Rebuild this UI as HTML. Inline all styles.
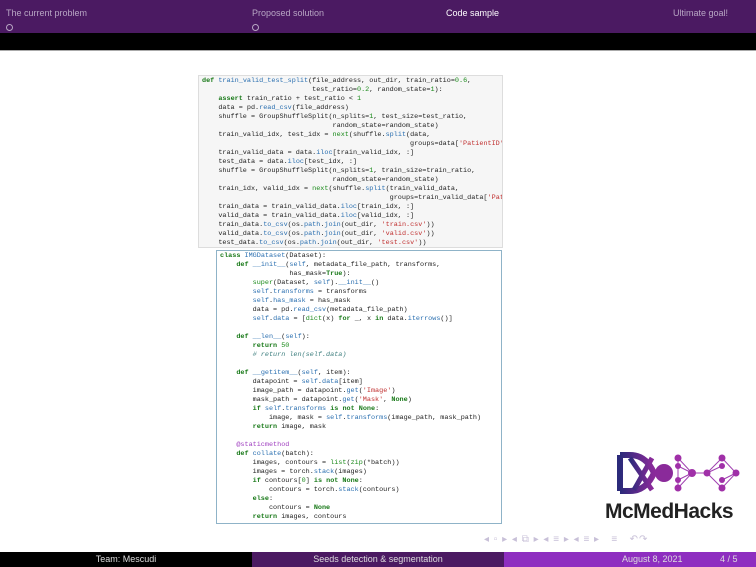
<!DOCTYPE html>
<html><head><style>
body{margin:0;width:756px;height:567px;position:relative;background:#fff;overflow:hidden;font-family:"Liberation Sans",sans-serif}
.hdr{position:absolute;left:0;top:0;width:756px;height:33px;background:#4b1a62}
.hdr span{position:absolute;top:8px;font-size:9px;color:#b8a6c4}
.dot{position:absolute;top:24px;width:5px;height:5px;border:1px solid #b8a6c4;border-radius:50%}
.blk{position:absolute;left:0;top:33px;width:756px;height:17px;background:#000;border-bottom:1px solid #aaa}
pre{margin:0;font-family:"Liberation Mono",monospace;font-size:6.8px;color:#222;position:absolute}
.c1{left:198px;top:75px;width:303px;height:171px;background:#f6f6f6;border:1px solid #ddd;overflow:hidden}
.c1 pre{left:3px;top:1px;line-height:9px}
.c2{left:216px;top:250px;width:284px;height:272px;background:#fff;border:1px solid #8fb3c8}
.c2 pre{left:3px;top:1px;line-height:9px}
b{color:#1a7a1a}
.f{color:#2a6fb0}
.s{color:#c03030}
.n{color:#1a8a1a}
.m{color:#a040c0}
i{color:#408080}
.ft{position:absolute;top:552px;height:15px;font-size:9px;color:#ddd;text-align:center;line-height:15px}
</style></head><body>
<div class="hdr">
<span style="left:6px">The current problem</span>
<span style="left:252px">Proposed solution</span>
<span style="left:446px;color:#fff">Code sample</span>
<span style="left:673px">Ultimate goal!</span>
<div class="dot" style="left:6px"></div><div class="dot" style="left:252px"></div>
</div>
<div class="blk"></div>
<div class="c1" style="position:absolute"><pre><b>def</b> <span class="f">train_valid_test_split</span>(file_address, out_dir, train_ratio=<span class="n">0.6</span>,
                           test_ratio=<span class="n">0.2</span>, random_state=<span class="n">1</span>):
    <b>assert</b> train_ratio + test_ratio &lt; <span class="n">1</span>
    data = pd.<span class="f">read_csv</span>(file_address)
    shuffle = GroupShuffleSplit(n_splits=<span class="n">1</span>, test_size=test_ratio,
                                random_state=random_state)
    train_valid_idx, test_idx = <span class="n">next</span>(shuffle.<span class="f">split</span>(data,
                                                   groups=data[<span class="s">'PatientID'</span>]))
    train_valid_data = data.<span class="f">iloc</span>[train_valid_idx, :]
    test_data = data.<span class="f">iloc</span>[test_idx, :]
    shuffle = GroupShuffleSplit(n_splits=<span class="n">1</span>, train_size=train_ratio,
                                random_state=random_state)
    train_idx, valid_idx = <span class="n">next</span>(shuffle.<span class="f">split</span>(train_valid_data,
                                              groups=train_valid_data[<span class="s">'PatientID'</span>]))
    train_data = train_valid_data.<span class="f">iloc</span>[train_idx, :]
    valid_data = train_valid_data.<span class="f">iloc</span>[valid_idx, :]
    train_data.<span class="f">to_csv</span>(os.<span class="f">path</span>.<span class="f">join</span>(out_dir, <span class="s">'train.csv'</span>))
    valid_data.<span class="f">to_csv</span>(os.<span class="f">path</span>.<span class="f">join</span>(out_dir, <span class="s">'valid.csv'</span>))
    test_data.<span class="f">to_csv</span>(os.<span class="f">path</span>.<span class="f">join</span>(out_dir, <span class="s">'test.csv'</span>))</pre></div>
<div class="c2" style="position:absolute"><pre><b>class</b> <span class="f">IMGDataset</span>(Dataset):
    <b>def</b> <span class="f">__init__</span>(<span class="f">self</span>, metadata_file_path, transforms,
                 has_mask=<b>True</b>):
        <span class="n">super</span>(Dataset, <span class="f">self</span>).<span class="f">__init__</span>()
        <span class="f">self</span>.<span class="f">transforms</span> = transforms
        <span class="f">self</span>.<span class="f">has_mask</span> = has_mask
        data = pd.<span class="f">read_csv</span>(metadata_file_path)
        <span class="f">self</span>.<span class="f">data</span> = [<span class="n">dict</span>(x) <b>for</b> _, x <b>in</b> data.<span class="f">iterrows</span>()]

    <b>def</b> <span class="f">__len__</span>(<span class="f">self</span>):
        <b>return</b> <span class="n">50</span>
        <i># return len(self.data)</i>

    <b>def</b> <span class="f">__getitem__</span>(<span class="f">self</span>, item):
        datapoint = <span class="f">self</span>.<span class="f">data</span>[item]
        image_path = datapoint.<span class="f">get</span>(<span class="s">'Image'</span>)
        mask_path = datapoint.<span class="f">get</span>(<span class="s">'Mask'</span>, <b>None</b>)
        <b>if</b> <span class="f">self</span>.<span class="f">transforms</span> <b>is not None</b>:
            image, mask = <span class="f">self</span>.<span class="f">transforms</span>(image_path, mask_path)
        <b>return</b> image, mask

    <span class="m">@staticmethod</span>
    <b>def</b> <span class="f">collate</span>(batch):
        images, contours = <span class="n">list</span>(<span class="n">zip</span>(*batch))
        images = torch.<span class="f">stack</span>(images)
        <b>if</b> contours[<span class="n">0</span>] <b>is not None</b>:
            contours = torch.<span class="f">stack</span>(contours)
        <b>else</b>:
            contours = <b>None</b>
        <b>return</b> images, contours</pre></div>
<svg style="position:absolute;left:612px;top:450px" width="130" height="48" viewBox="0 0 130 48">
<defs><linearGradient id="g" x1="0" x2="1"><stop offset="0" stop-color="#2b2a7a"/><stop offset="1" stop-color="#8a2a9a"/></linearGradient></defs>
<path d="M8 5 V41 M8 5 H18 Q34 5 42 23 Q34 41 18 41 H8" fill="none" stroke="url(#g)" stroke-width="6"/>
<path d="M18 8 L40 40 M22 40 L40 8" fill="none" stroke="url(#g)" stroke-width="5"/>
<circle cx="52" cy="23" r="9" fill="#8a2a9a"/>
<g stroke="#a040b0" stroke-width="1" fill="none"><path d="M66 8 L80 23 L66 38 M66 8 L66 38 M80 23 L95 23 M110 8 L95 23 L110 38 M110 8 L124 23 L110 38 M66 16 L80 23 M66 30 L80 23 M110 16 L95 23 M110 30 L124 23"/></g>
<g fill="#a030a8"><circle cx="66" cy="8" r="3.5"/><circle cx="66" cy="16" r="3"/><circle cx="66" cy="30" r="3"/><circle cx="66" cy="38" r="3.5"/><circle cx="80" cy="23" r="4"/><circle cx="95" cy="23" r="3.5"/><circle cx="110" cy="8" r="3.5"/><circle cx="110" cy="16" r="3"/><circle cx="110" cy="30" r="3"/><circle cx="110" cy="38" r="3.5"/><circle cx="124" cy="23" r="3.5"/></g>
</svg>
<div style="position:absolute;left:605px;top:500px;font-size:21px;font-weight:bold;color:#222;letter-spacing:-0.5px">McMedHacks</div>
<div style="position:absolute;left:484px;top:534px;font-size:10px;color:#c8c0d8;letter-spacing:1px">◂ ▫ ▸ ◂ ⧉ ▸ ◂ ≡ ▸ ◂ ≡ ▸ &nbsp; ≡ &nbsp; ↶↷</div>
<div class="ft" style="left:0;width:252px;background:#000">Team: Mescudi</div>
<div class="ft" style="left:252px;width:252px;background:#4b1a62">Seeds detection &amp; segmentation</div>
<div class="ft" style="left:504px;width:252px;background:#8e2ec0"><span style="position:absolute;left:118px">August 8, 2021</span><span style="position:absolute;left:216px">4 / 5</span></div>
</body></html>
